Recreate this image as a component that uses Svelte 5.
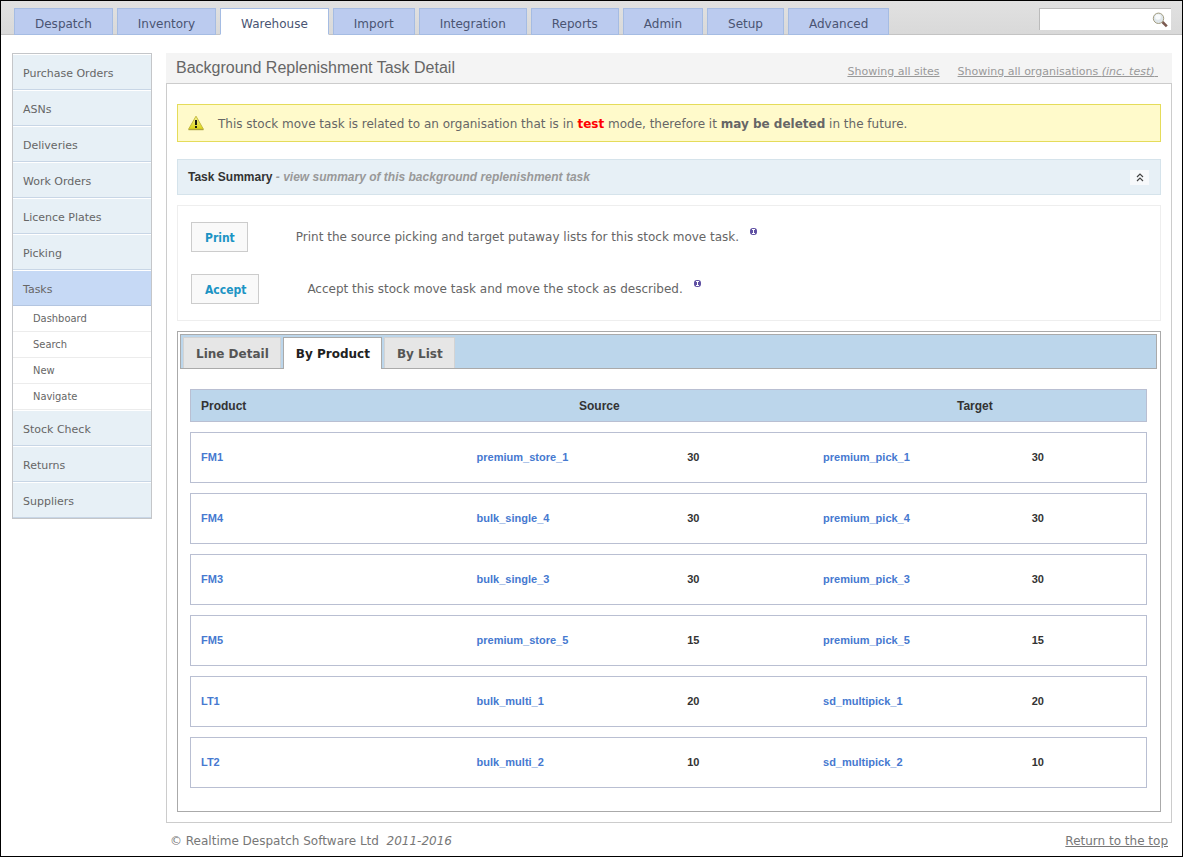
<script lang="ts">
	const sections = [
		'Despatch',
		'Inventory',
		'Warehouse',
		'Import',
		'Integration',
		'Reports',
		'Admin',
		'Setup',
		'Advanced',
	];

	const menu = [
		{ label: 'Purchase Orders' },
		{ label: 'ASNs' },
		{ label: 'Deliveries' },
		{ label: 'Work Orders' },
		{ label: 'Licence Plates' },
		{ label: 'Picking' },
		{ label: 'Tasks', children: ['Dashboard', 'Search', 'New', 'Navigate'] },
		{ label: 'Stock Check' },
		{ label: 'Returns' },
		{ label: 'Suppliers' },
	];

	const actions = [
		{
			label: 'Print',
			text: 'Print the source picking and target putaway lists for this stock move task.',
		},
		{ label: 'Accept', text: 'Accept this stock move task and move the stock as described.' },
	];

	const views = ['Line Detail', 'By Product', 'By List'];

	const moves = [
		{ product: 'FM1', source: 'premium_store_1', target: 'premium_pick_1', qty: 30 },
		{ product: 'FM4', source: 'bulk_single_4', target: 'premium_pick_4', qty: 30 },
		{ product: 'FM3', source: 'bulk_single_3', target: 'premium_pick_3', qty: 30 },
		{ product: 'FM5', source: 'premium_store_5', target: 'premium_pick_5', qty: 15 },
		{ product: 'LT1', source: 'bulk_multi_1', target: 'sd_multipick_1', qty: 20 },
		{ product: 'LT2', source: 'bulk_multi_2', target: 'sd_multipick_2', qty: 10 },
	];

	let section = $state('Warehouse');
	let view = $state('By Product');
	let open = $state(true);
</script>

<div class="page" id="top">
	<header>
		<nav class="sections">
			{#each sections as name}
				<a href="#top" class:active={section === name} onclick={() => (section = name)}>{name}</a>
			{/each}
		</nav>
		<form class="search" onsubmit={(e) => e.preventDefault()}>
			<input type="text" aria-label="Search" />
			<button type="submit" aria-label="Go">
				<svg width="16" height="16" viewBox="0 0 16 16">
					<path d="M10.5 10l4.3 4.3" stroke="#7a5a50" stroke-width="2.6" />
					<circle cx="6.5" cy="6.3" r="5.2" fill="#dfe6ea" stroke="#a29c80" />
					<circle cx="6" cy="5" r="2.8" fill="#f8fafb" />
				</svg>
			</button>
		</form>
	</header>

	<div class="body">
		<ul class="menu">
			{#each menu as item}
				<li>
					<a href="#top" class="item" class:current={item.children}>{item.label}</a>
					{#if item.children}
						<ul class="sub">
							{#each item.children as child}
								<li><a href="#top">{child}</a></li>
							{/each}
						</ul>
					{/if}
				</li>
			{/each}
		</ul>

		<main>
			<div class="title">
				<h1>Background Replenishment Task Detail</h1>
				<div class="scope">
					<a href="#top">Showing all sites</a>
					<a href="#top">Showing all organisations <em>(inc. test)</em>&nbsp;</a>
				</div>
			</div>

			<div class="content">
				<div class="alert">
					<svg width="16" height="16" viewBox="0 0 16 16">
						<defs>
							<linearGradient id="warn" x1="0" y1="0" x2="0" y2="1">
								<stop offset="0" stop-color="#f6f3a0" />
								<stop offset="1" stop-color="#ded60f" />
							</linearGradient>
						</defs>
						<path d="M8 1.2L15.4 14.2H.6z" fill="url(#warn)" stroke="#c3b93a" stroke-linejoin="round" />
						<path d="M.5 14.7h15" stroke="#a69c38" />
						<path d="M7 5h2v5H7zM7 11h2v2H7z" fill="#1c1c10" />
					</svg>
					<p>
						This stock move task is related to an organisation that is in <strong class="test">test</strong>
						mode, therefore it <strong>may be deleted</strong> in the future.
					</p>
				</div>

				<div class="summary">
					<h2>Task Summary <em>- view summary of this background replenishment task</em></h2>
					<button aria-label="Toggle summary" aria-expanded={open} onclick={() => (open = !open)}>
						<svg width="8" height="10" viewBox="0 0 8 10">
							<path d="M1 5L4 2l3 3M1 9l3-3 3 3" fill="none" stroke="#444" stroke-width="1.2" />
						</svg>
					</button>
				</div>

				{#if open}
					<div class="actions">
						{#each actions as action}
							<div class="action">
								<button>{action.label}</button>
								<p>{action.text}</p>
								<svg width="7" height="7" viewBox="0 0 7 7">
									<rect width="7" height="7" rx="3" fill="#5f50a3" />
									<path d="M2 1.5h3M3.5 1.5v4M2 5.5h3" stroke="#fff" />
								</svg>
							</div>
						{/each}
					</div>
				{/if}

				<div class="panel">
					<div class="views" role="tablist">
						{#each views as name}
							<button
								role="tab"
								aria-selected={view === name}
								class:active={view === name}
								onclick={() => (view = name)}>{name}</button
							>
						{/each}
					</div>

					<table>
						<!-- Header and body cells break at different points, so they share a finer grid -->
						<colgroup>
							<col class="c1" />
							<col class="c2" />
							<col class="c3" />
							<col class="c4" />
							<col class="c5" />
							<col class="c6" />
							<col />
						</colgroup>
						<thead>
							<tr>
								<th colspan="2">Product</th>
								<th colspan="3">Source</th>
								<th colspan="2">Target</th>
							</tr>
						</thead>
						<tbody>
							{#each moves as move}
								<tr>
									<td><a href="#top">{move.product}</a></td>
									<td colspan="2"><a href="#top">{move.source}</a></td>
									<td>{move.qty}</td>
									<td colspan="2"><a href="#top">{move.target}</a></td>
									<td>{move.qty}</td>
								</tr>
							{/each}
						</tbody>
					</table>
				</div>
			</div>

			<footer>
				<p>© Realtime Despatch Software Ltd &nbsp;<em>2011-2016</em></p>
				<a href="#top">Return to the top</a>
			</footer>
		</main>
	</div>
</div>

<style>
	.page {
		box-sizing: border-box;
		min-height: 100vh;
		border: 1px solid #000;
		background: #fff;
		color: #666;
		font: 12px/16px Verdana, 'DejaVu Sans', sans-serif;
	}

	h1,
	h2,
	p,
	ul {
		margin: 0;
		padding: 0;
		list-style: none;
	}

	button {
		cursor: pointer;
	}

	header {
		display: flex;
		justify-content: space-between;
		padding: 7px 11px 0 13px;
		height: 26px;
		border-bottom: 1px solid #c4c4c4;
		background: linear-gradient(#e1e1e1, #d9d9d9);
	}

	.sections {
		display: flex;
		gap: 4px;
	}

	.sections a {
		box-sizing: border-box;
		height: 27px;
		padding: 7px 20px 0;
		border: 1px solid #a5bce3;
		background: #bbcbef;
		color: #4a5472;
		text-decoration: none;
	}

	.sections a.active {
		border-bottom-color: #fff;
		background: #fff;
	}

	.search {
		box-sizing: border-box;
		display: flex;
		align-items: center;
		width: 132px;
		height: 22px;
		border: 1px solid #bbb;
		border-width: 1px 0 0 1px;
		background: #fff;
	}

	.search input {
		flex: 1;
		min-width: 0;
		border: 0;
		background: none;
		outline: 0;
	}

	.search button {
		display: flex;
		padding: 0 3px 0 0;
		border: 0;
		background: none;
	}

	.body {
		display: flex;
		align-items: flex-start;
		gap: 14px;
		padding: 18px 10px 0 11px;
	}

	.menu {
		flex: none;
		box-sizing: border-box;
		width: 140px;
		border: 1px solid #c4c6c9;
		font-size: 11px;
	}

	.menu a {
		display: block;
		color: #666;
		text-decoration: none;
	}

	.item {
		padding: 11px 10px 7px;
		border-top: 1px solid #fff;
		border-bottom: 1px solid #c8d6e6;
		background: #e7f0f6;
	}

	.item.current {
		border-bottom-color: #b3c5e0;
		background: #c6d9f5;
	}

	.sub a {
		padding: 5px 20px 4px;
		border-bottom: 1px solid #ececec;
		background: #fff;
		font-family: 'DejaVu Sans Condensed', 'DejaVu Sans', sans-serif;
	}

	main {
		flex: 1;
		min-width: 0;
	}

	.title {
		display: flex;
		justify-content: space-between;
		height: 30px;
		padding: 0 14px 0 10px;
		background: #f4f4f4;
	}

	h1 {
		font: 16px/29px Arial, 'Liberation Sans', sans-serif;
		color: #666;
	}

	.scope {
		display: flex;
		gap: 18px;
		padding-top: 11px;
		font-size: 11px;
	}

	.scope a {
		color: #999;
	}

	.content {
		display: flex;
		flex-direction: column;
		gap: 10px;
		padding: 20px 10px 10px;
		border: 1px solid #ccc;
	}

	.alert {
		display: flex;
		align-items: center;
		gap: 14px;
		height: 36px;
		margin-bottom: 7px;
		padding: 0 10px;
		border: 1px solid #e5dc5a;
		background: #fffacb;
	}

	.alert p {
		padding-top: 2px;
	}

	.alert .test {
		color: #f00;
	}

	.summary {
		display: flex;
		align-items: center;
		justify-content: space-between;
		height: 34px;
		padding: 0 11px 0 10px;
		border: 1px solid #d5e3eb;
		background: #e7f0f6;
	}

	h2 {
		font: bold 12px/16px Arial, 'Liberation Sans', sans-serif;
		color: #333;
	}

	h2 em {
		color: #999;
	}

	.summary button {
		display: flex;
		align-items: center;
		justify-content: center;
		width: 19px;
		height: 15px;
		padding: 0;
		border: 0;
		background: #f7f9fb;
	}

	.actions {
		display: flex;
		flex-direction: column;
		gap: 22px;
		padding: 16px 13px;
		border: 1px solid #eee;
	}

	.action {
		display: flex;
		align-items: center;
	}

	.action button {
		height: 30px;
		margin-right: 48px;
		padding: 1px 12px 0 13px;
		border: 1px solid #ccc;
		background: #f9f9f9;
		color: #1c94c4;
		font: bold 12px 'DejaVu Sans Condensed', 'DejaVu Sans', sans-serif;
	}

	.action svg {
		margin: 0 0 11px 11px;
	}

	.panel {
		padding: 2px 3px 13px 2px;
		border: 1px solid #aaa;
	}

	.views {
		display: flex;
		align-items: flex-end;
		gap: 2px;
		height: 33px;
		padding: 0 2px;
		border: 1px solid #aaa;
		background: #bcd6eb;
	}

	.views button {
		height: 31px;
		padding: 1px 11px 0 12px;
		border: 1px solid #d3d3d3;
		border-bottom: 0;
		background: #e6e6e6;
		color: #555;
		font: bold 12px Verdana, 'DejaVu Sans', sans-serif;
	}

	.views button.active {
		height: 32px;
		margin-bottom: -1px;
		border-color: #aaa;
		background: #fff;
		color: #212121;
	}

	table {
		width: calc(100% - 20px);
		margin: 10px 10px 0;
		border-collapse: separate;
		border-spacing: 0 10px;
		table-layout: fixed;
		color: #333;
		font: bold 11px/15px Arial, 'Liberation Sans', sans-serif;
	}

	.c1 {
		width: 28.8%;
	}

	.c2 {
		width: 10.7%;
	}

	.c3 {
		width: 11.3%;
	}

	.c4 {
		width: 14.2%;
	}

	.c5 {
		width: 14%;
	}

	.c6 {
		width: 7.8%;
	}

	th,
	td {
		border: solid #b9bfd2;
		border-width: 1px 0;
		text-align: left;
	}

	th {
		padding: 9px 11px 7px;
		background: #bcd6eb;
		font-size: 12px;
	}

	td {
		padding: 17px 11px;
	}

	th:first-child,
	td:first-child {
		padding-left: 10px;
		border-left-width: 1px;
	}

	th:last-child,
	td:last-child {
		border-right-width: 1px;
	}

	td a {
		color: #4679d0;
		text-decoration: none;
	}

	footer {
		display: flex;
		justify-content: space-between;
		padding: 10px 4px 7px;
		color: #777;
	}

	footer a {
		color: #777;
	}
</style>
